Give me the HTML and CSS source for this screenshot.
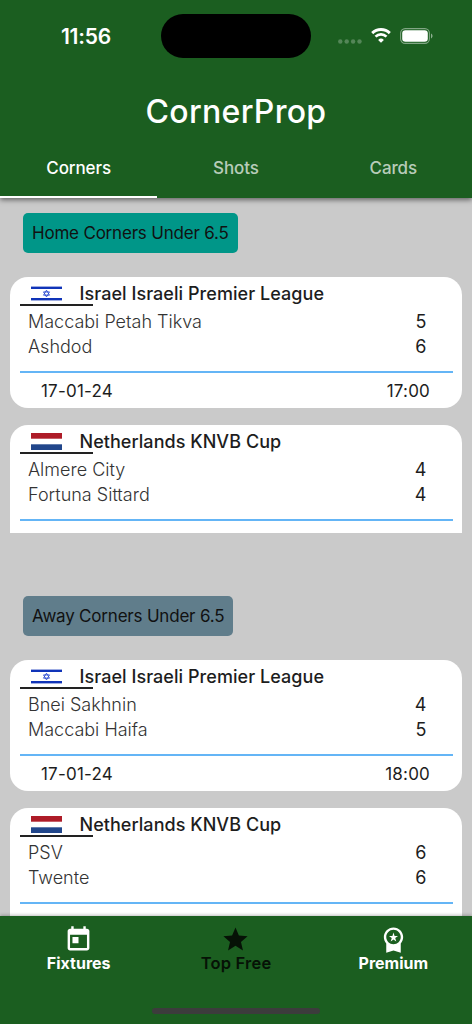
FILE: index.html
```html
<!DOCTYPE html>
<html lang="en">
<head>
    <meta charset="UTF-8">
    <meta name="viewport" content="width=device-width, initial-scale=1.0">
    <title>CornerProp</title>
    <link rel="stylesheet" href="styles.css">
</head>
<body>
    <header>
        <div class="status-bar">
            <span class="time">11:56</span>
            <div class="island"></div>
            <div class="status-icons">
                <svg class="signal" width="24" height="5" viewBox="0 0 24 5">
                    <circle cx="2.3" cy="2.5" r="2.2"/>
                    <circle cx="8.7" cy="2.5" r="2.2"/>
                    <circle cx="15.1" cy="2.5" r="2.2"/>
                    <circle cx="21.5" cy="2.5" r="2.2"/>
                </svg>
                <svg class="wifi" width="20" height="15" viewBox="0 0 20 15">
                    <path d="M1.2 5.1a12.6 12.6 0 0 1 17.6 0" fill="none" stroke="#fff" stroke-width="2.9"/>
                    <path d="M4.5 8.6a7.9 7.9 0 0 1 11 0" fill="none" stroke="#fff" stroke-width="2.7"/>
                    <path d="M10 14.8l-2.9-2.9a4.1 4.1 0 0 1 5.8 0z" fill="#fff"/>
                </svg>
                <svg class="battery" width="33" height="16" viewBox="0 0 33 16">
                    <rect x="0.6" y="0.6" width="28.8" height="14.8" rx="4.6" fill="none" stroke="#fff" stroke-opacity="0.45" stroke-width="1.1"/>
                    <rect x="2.2" y="2.2" width="25.6" height="11.6" rx="3.2" fill="#fff"/>
                    <path d="M31 5.6c2 .8 2 4 0 4.8z" fill="#fff" fill-opacity="0.5"/>
                </svg>
            </div>
        </div>
        <h1>CornerProp</h1>
        <div class="tabs">
            <div class="tab active">Corners</div>
            <div class="tab">Shots</div>
            <div class="tab">Cards</div>
        </div>
    </header>

    <main>
        <section class="group">
            <div class="chip chip-home">Home Corners Under 6.5</div>
            <div class="card-list">
                <div class="card">
                    <div class="league">
                        <div class="flag-box">
                            <svg width="31" height="15" viewBox="0 0 31 15">
                                <rect y="0.6" width="31" height="2.4" fill="#1034b8"/>
                                <rect y="12" width="31" height="2.4" fill="#1034b8"/>
                                <path d="M15.5 4.2l3 5h-6zM15.5 10.9l-3-5h6z" fill="none" stroke="#2a4bd0" stroke-width="0.9"/>
                            </svg>
                        </div>
                        <span class="league-name">Israel Israeli Premier League</span>
                    </div>
                    <div class="team"><span>Maccabi Petah Tikva</span><span class="score">5</span></div>
                    <div class="team"><span>Ashdod</span><span class="score">6</span></div>
                    <div class="kickoff"><span>17-01-24</span><span>17:00</span></div>
                </div>
                <div class="card">
                    <div class="league">
                        <div class="flag-box">
                            <svg width="31" height="17" viewBox="0 0 31 17">
                                <rect width="31" height="5.7" fill="#ae1c28"/>
                                <rect y="11.3" width="31" height="5.7" fill="#21468b"/>
                            </svg>
                        </div>
                        <span class="league-name">Netherlands KNVB Cup</span>
                    </div>
                    <div class="team"><span>Almere City</span><span class="score">4</span></div>
                    <div class="team"><span>Fortuna Sittard</span><span class="score">4</span></div>
                    <div class="kickoff"></div>
                </div>
            </div>
        </section>

        <section class="group">
            <div class="chip chip-away">Away Corners Under 6.5</div>
            <div class="card-list">
                <div class="card">
                    <div class="league">
                        <div class="flag-box">
                            <svg width="31" height="15" viewBox="0 0 31 15">
                                <rect y="0.6" width="31" height="2.4" fill="#1034b8"/>
                                <rect y="12" width="31" height="2.4" fill="#1034b8"/>
                                <path d="M15.5 4.2l3 5h-6zM15.5 10.9l-3-5h6z" fill="none" stroke="#2a4bd0" stroke-width="0.9"/>
                            </svg>
                        </div>
                        <span class="league-name">Israel Israeli Premier League</span>
                    </div>
                    <div class="team"><span>Bnei Sakhnin</span><span class="score">4</span></div>
                    <div class="team"><span>Maccabi Haifa</span><span class="score">5</span></div>
                    <div class="kickoff"><span>17-01-24</span><span>18:00</span></div>
                </div>
                <div class="card">
                    <div class="league">
                        <div class="flag-box">
                            <svg width="31" height="17" viewBox="0 0 31 17">
                                <rect width="31" height="5.7" fill="#ae1c28"/>
                                <rect y="11.3" width="31" height="5.7" fill="#21468b"/>
                            </svg>
                        </div>
                        <span class="league-name">Netherlands KNVB Cup</span>
                    </div>
                    <div class="team"><span>PSV</span><span class="score">6</span></div>
                    <div class="team"><span>Twente</span><span class="score">6</span></div>
                    <div class="kickoff"></div>
                </div>
            </div>
        </section>
    </main>

    <nav>
        <div class="nav-items">
            <div class="nav-item">
                <svg viewBox="0 0 24 24"><path d="M19 3h-1V1h-2v2H8V1H6v2H5c-1.11 0-1.99.9-1.99 2L3 19c0 1.1.89 2 2 2h14c1.1 0 2-.9 2-2V5c0-1.1-.9-2-2-2zm0 16H5V8h14v11zM7 10h5v5H7v-5z"/></svg>
                <span>Fixtures</span>
            </div>
            <div class="nav-item selected">
                <svg viewBox="0 0 24 24"><path d="M12 17.27L18.18 21l-1.64-7.03L22 9.24l-7.19-.61L12 2 9.19 8.63 2 9.24l5.46 4.73L5.82 21z"/></svg>
                <span>Top Free</span>
            </div>
            <div class="nav-item">
                <svg viewBox="0 0 24 24"><path d="M9.68 13.69L12 11.93l2.31 1.76-.88-2.85L15.75 9h-2.84L12 6.19 11.09 9H8.25l2.31 1.84-.88 2.85zM20 10c0-4.42-3.58-8-8-8s-8 3.58-8 8c0 2.03.76 3.87 2 5.28V23l6-2 6 2v-7.72c1.24-1.41 2-3.25 2-5.28zm-8-6c3.31 0 6 2.69 6 6s-2.69 6-6 6-6-2.69-6-6 2.69-6 6-6z"/></svg>
                <span>Premium</span>
            </div>
        </div>
        <div class="home-bar"></div>
    </nav>
</body>
</html>
```
FILE: styles.css
```css
body {
    margin: 0;
    height: 1024px;
    display: flex;
    flex-direction: column;
    font-family: Inter, "Liberation Sans", sans-serif;
    background-color: #cacaca;
    color: #1d1d1d;
    overflow: hidden;
}

header {
    flex: none;
    height: 198px;
    display: flex;
    flex-direction: column;
    background: #1b5e20;
    color: #fff;
    box-shadow: 0 2px 5px rgba(0, 0, 0, 0.5);
    z-index: 1;
}

.status-bar {
    display: grid;
    grid-template-columns: 161px 150px 161px;
    height: 72px;
    align-items: center;
}

.time {
    padding-left: 11px;
    text-align: center;
    font-size: 21px;
    font-weight: 600;
    letter-spacing: -0.2px;
}

.island {
    height: 44px;
    border-radius: 22px;
    background: #000;
}

.status-icons {
    display: flex;
    align-items: center;
    padding-left: 27px;
}

.signal {
    margin-top: 10px;
    fill: #fff;
    fill-opacity: 0.25;
}

.wifi {
    margin-left: 8.5px;
    margin-bottom: 1px;
}

.battery {
    margin-left: 9px;
    margin-bottom: 1px;
}

h1 {
    margin: 0;
    height: 78px;
    line-height: 79px;
    text-align: center;
    font-size: 32px;
    font-weight: 500;
    letter-spacing: 0.3px;
}

.tabs {
    display: grid;
    grid-template-columns: repeat(3, 1fr);
    height: 48px;
}

.tab {
    box-sizing: border-box;
    height: 48px;
    line-height: 37px;
    text-align: center;
    font-size: 17px;
    font-weight: 500;
    letter-spacing: -0.1px;
    color: rgba(255, 255, 255, 0.7);
}

.tab.active {
    color: #fff;
    border-bottom: 2.4px solid #fff;
}

main {
    flex: 1;
    min-height: 0;
    overflow: hidden;
    padding: 0 10px;
}

.group {
    padding-top: 15px;
    height: 368px;
}

.chip {
    width: fit-content;
    height: 40px;
    line-height: 40px;
    margin-left: 13px;
    padding: 0 9px;
    border-radius: 5px;
    font-size: 17px;
    letter-spacing: -0.2px;
    color: #111;
}

.chip-home {
    background: #009688;
}

.chip-away {
    background: #607d8b;
}

.card-list {
    margin-top: 24px;
    height: 256px;
    overflow: hidden;
}

.card {
    box-sizing: border-box;
    height: 131px;
    margin-bottom: 17px;
    padding: 0 9.5px;
    border-radius: 18px;
    background: #fff;
}

.league {
    display: flex;
    height: 32px;
}

.flag-box {
    box-sizing: border-box;
    display: flex;
    justify-content: center;
    align-items: center;
    width: 73px;
    height: 29px;
    padding: 6px 20px 0 0;
    border-bottom: 2px solid #222;
}

.league-name {
    margin-left: -13px;
    line-height: 33px;
    font-size: 18px;
    font-weight: 500;
    letter-spacing: 0.05px;
}

.team {
    display: flex;
    justify-content: space-between;
    height: 25.4px;
    line-height: 25px;
    padding: 0 26px 0 8.5px;
    font-size: 18px;
    font-weight: 300;
    color: #333;
}

.score {
    font-weight: 400;
    color: #1d1d1d;
}

.kickoff {
    display: flex;
    justify-content: space-between;
    margin-top: 11.2px;
    border-top: 2px solid #64b5f6;
    padding: 0 22.5px 0 21.5px;
    line-height: 37px;
    font-size: 17px;
    letter-spacing: 0.2px;
}

nav {
    flex: none;
    height: 108.5px;
    background: #1b5e20;
    color: #fff;
    box-shadow: 0 -1px 3px rgba(0, 0, 0, 0.25);
    z-index: 1;
}

.nav-items {
    display: grid;
    grid-template-columns: repeat(3, 1fr);
    height: 92.5px;
}

.nav-item {
    display: flex;
    flex-direction: column;
    align-items: center;
    padding-top: 9px;
    font-size: 16px;
    line-height: 19px;
    font-weight: 700;
}

.nav-item svg {
    width: 29px;
    height: 29px;
    fill: currentColor;
}

.nav-item.selected {
    color: #061206;
    font-size: 16.5px;
    font-weight: 600;
    letter-spacing: 0.2px;
}

.home-bar {
    width: 168px;
    height: 6px;
    margin: 0 auto;
    border-radius: 3px;
    background: #3c3c3c;
}
```
